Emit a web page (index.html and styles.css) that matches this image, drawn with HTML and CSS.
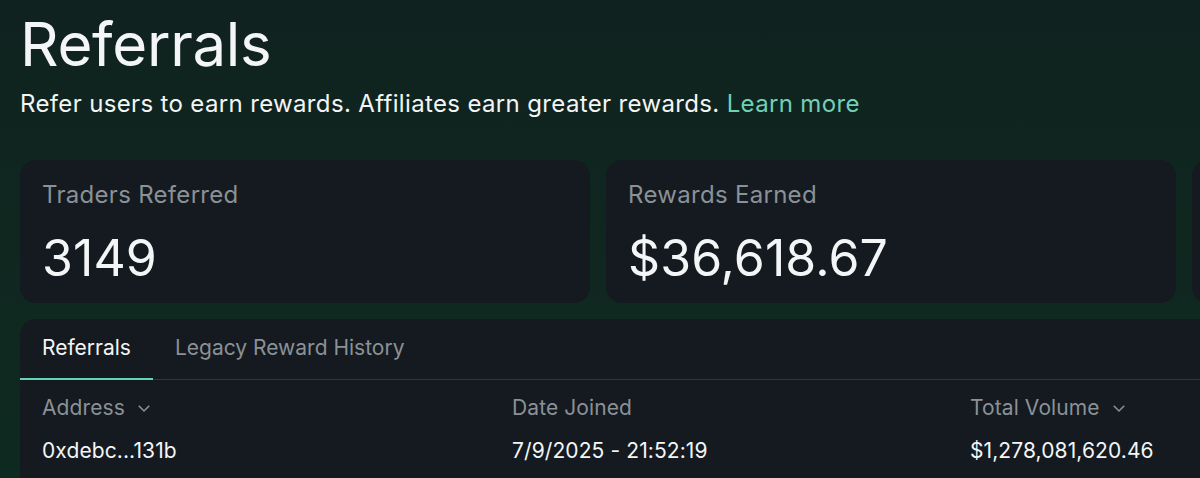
FILE: index.html
```html
<!DOCTYPE html>
<html lang="en">
<head>
    <meta charset="UTF-8">
    <meta name="viewport" content="width=device-width, initial-scale=1.0">
    <title>Referrals</title>
    <link rel="stylesheet" href="styles.css">
</head>
<body>
    <div class="page">
        <header class="page-header">
            <h1>Referrals</h1>
            <p class="subtitle">Refer users to earn rewards. Affiliates earn greater rewards. <a href="#" class="learn-more">Learn more</a></p>
        </header>

        <div class="stats-grid">
            <div class="stat-card">
                <div class="stat-label">Traders Referred</div>
                <div class="stat-value">3149</div>
            </div>
            <div class="stat-card">
                <div class="stat-label">Rewards Earned</div>
                <div class="stat-value">$36,618.67</div>
            </div>
            <div class="stat-card"></div>
        </div>

        <div class="panel">
            <div class="tabs">
                <div class="tab active">Referrals</div>
                <div class="tab">Legacy Reward History</div>
            </div>
            <div class="table">
                <div class="table-row table-head">
                    <div class="cell">Address
                        <svg class="chevron" viewBox="0 0 12 12"><polyline points="1.5,4 6,8.5 10.5,4" /></svg>
                    </div>
                    <div class="cell">Date Joined</div>
                    <div class="cell">Total Volume
                        <svg class="chevron" viewBox="0 0 12 12"><polyline points="1.5,4 6,8.5 10.5,4" /></svg>
                    </div>
                </div>
                <div class="table-row">
                    <div class="cell">0xdebc...131b</div>
                    <div class="cell">7/9/2025 - 21:52:19</div>
                    <div class="cell">$1,278,081,620.46</div>
                </div>
            </div>
        </div>
    </div>
</body>
</html>
```

FILE: styles.css
```css
html, body {
    margin: 0;
    padding: 0;
    overflow: hidden;
}
body {
    font-family: Inter, "Noto Sans", sans-serif;
    background: linear-gradient(180deg, #10221f 0%, #0f2820 60%, #0e2a1f 100%);
    color: #f3f5f6;
    min-height: 100vh;
}
.page {
    width: 1762px;
    padding: 8px 20px 0;
}
h1 {
    font-size: 60px;
    font-weight: 400;
    line-height: 72px;
    margin: 0;
    letter-spacing: -0.3px;
}
.subtitle {
    font-size: 24px;
    line-height: 32px;
    margin: 8px 0 0;
    letter-spacing: 0.35px;
}
.learn-more {
    color: #6fd1b6;
    text-decoration: none;
}
.stats-grid {
    display: grid;
    grid-template-columns: repeat(3, 570px);
    gap: 16px;
    margin-top: 40px;
}
.stat-card {
    background-color: #141a20;
    border-radius: 16px;
    padding: 20px 22px 15px;
    height: 143px;
    box-sizing: border-box;
}
.stat-label {
    font-size: 24px;
    line-height: 30px;
    color: #8b9196;
    letter-spacing: 0.3px;
}
.stat-value {
    font-size: 50px;
    line-height: 58px;
    margin-top: 19px;
    letter-spacing: 0.1px;
}
.panel {
    margin-top: 16px;
    background-color: #141a20;
    border-radius: 16px 16px 0 0;
    height: 200px;
}
.tabs {
    display: flex;
    border-bottom: 1px solid #30363b;
}
.tab {
    font-size: 21px;
    line-height: 28px;
    padding: 15px 22px 16px;
    color: #8b9196;
    border-bottom: 2px solid transparent;
    margin-bottom: -1px;
}
.tab.active {
    color: #f3f5f6;
    border-bottom-color: #64d2b4;
}
.table {
    padding: 0 22px;
}
.table-row {
    display: grid;
    grid-template-columns: 470px 458px 1fr;
    font-size: 21px;
    line-height: 28px;
    padding: 8px 0;
    letter-spacing: 0.1px;
}
.table-head {
    color: #8b9196;
    padding-top: 14px;
    padding-bottom: 7px;
}
.cell {
    display: flex;
    align-items: center;
    gap: 12px;
    white-space: nowrap;
}
.chevron {
    width: 14px;
    height: 14px;
    fill: none;
    stroke: #8b9196;
    stroke-width: 1.3;
}
```
